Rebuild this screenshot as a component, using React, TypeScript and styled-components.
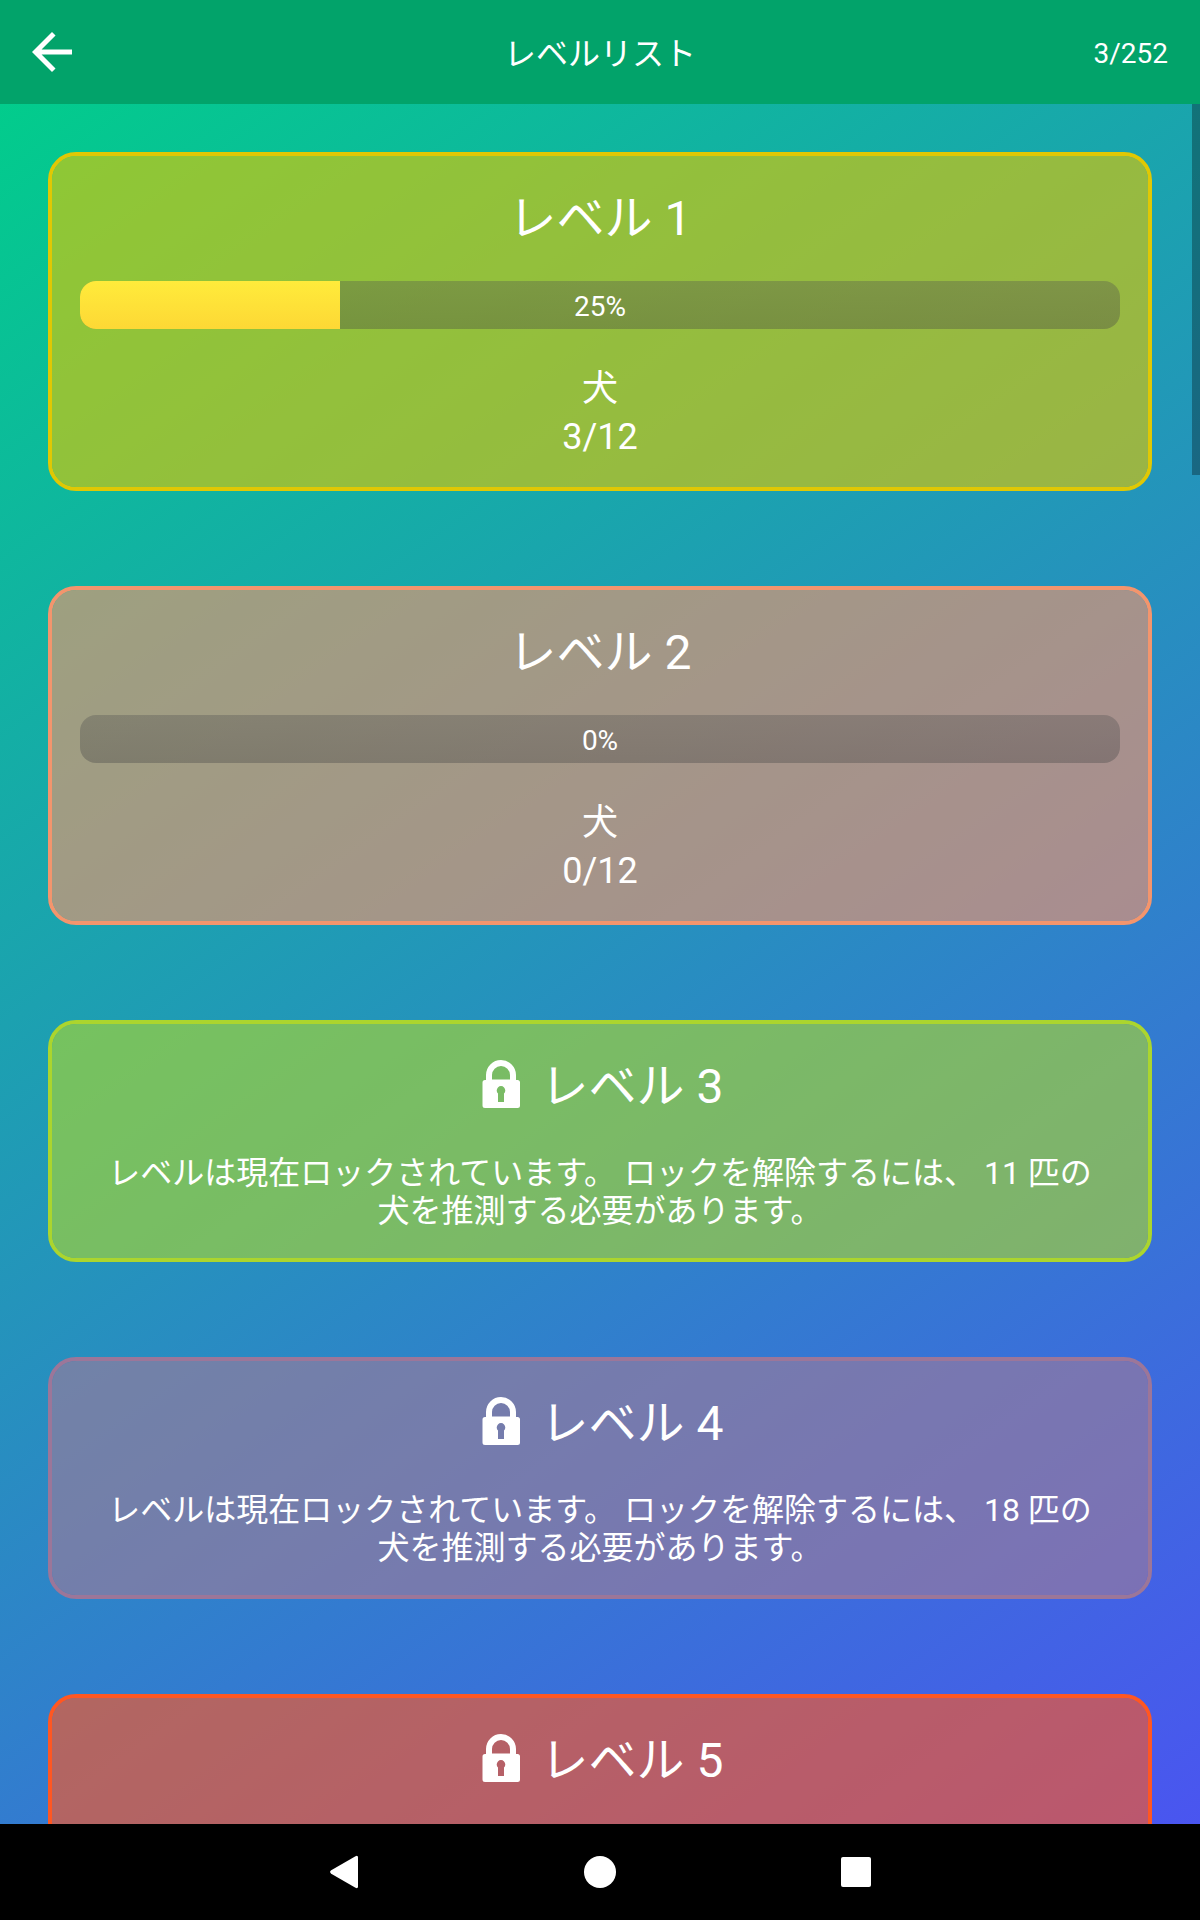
import React from "react";
import styled, { createGlobalStyle } from "styled-components";

const GlobalStyle = createGlobalStyle`
  * {
    box-sizing: border-box;
  }

  html,
  body {
    margin: 0;
    background: #000;
  }

  body {
    font-family: Roboto, "Noto Sans CJK JP", sans-serif;
    color: #fff;
  }
`;

const Screen = styled.div`
  display: flex;
  flex-direction: column;
  height: 100vh;
`;

const Header = styled.header`
  display: grid;
  grid-template-columns: 1fr auto 1fr;
  align-items: center;
  flex: none;
  height: 104px;
  padding: 0 32px;
  background: #02a36a;
`;

const BackButton = styled.button`
  display: flex;
  justify-self: start;
  padding: 0;
  border: 0;
  background: none;
  color: inherit;
  cursor: pointer;
`;

const HeaderTitle = styled.h1`
  margin: 0;
  padding-top: 4px;
  font-size: 32px;
  font-weight: 400;
  line-height: 38px;
`;

const HeaderCount = styled.span`
  justify-self: end;
  padding-top: 4px;
  font-size: 28px;
  line-height: 34px;
`;

const Content = styled.main`
  position: relative;
  flex: 1;
  min-height: 0;
  background: linear-gradient(145deg, #02cc8c, #4a55f0);
`;

const LevelList = styled.ul`
  display: flex;
  flex-direction: column;
  gap: 95px;
  height: 100%;
  margin: 0;
  padding: 48px;
  overflow-y: auto;
  scrollbar-width: none;
  list-style: none;
`;

const ScrollThumb = styled.div`
  position: absolute;
  top: 0;
  right: 0;
  width: 8px;
  height: 371px;
  background: rgba(0, 0, 0, 0.3);
`;

const Card = styled.li<{ $border: string; $fill: string }>`
  display: flex;
  flex-direction: column;
  flex: none;
  gap: 35px;
  padding: 36px 28px 26px;
  border: 4px solid ${(p) => p.$border};
  border-radius: 28px;
  background: ${(p) => p.$fill};
  background-clip: padding-box;
  text-align: center;
`;

const TitleRow = styled.div`
  display: flex;
  justify-content: center;
  gap: 16px;
`;

const CardTitle = styled.h2`
  margin: 0;
  font-size: 48px;
  font-weight: 400;
  line-height: 54px;
`;

const ProgressTrack = styled.div`
  position: relative;
  display: flex;
  align-items: center;
  justify-content: center;
  height: 48px;
  overflow: hidden;
  border-radius: 16px;
  background: linear-gradient(rgba(80, 80, 80, 0.34), rgba(68, 68, 68, 0.36));
`;

const ProgressFill = styled.div`
  position: absolute;
  inset: 0 auto 0 0;
  background: linear-gradient(#ffeb3b, #fdd835);
`;

const ProgressLabel = styled.span`
  position: relative;
  padding-top: 4px;
  font-size: 28px;
  line-height: 34px;
`;

const Stats = styled.div`
  padding-top: 1px;
  font-size: 36px;
  line-height: 48px;
`;

const Description = styled.p`
  margin: 0;
  padding: 5px 16px 2px;
  font-size: 32px;
  line-height: 38px;
`;

const NavBar = styled.nav`
  display: flex;
  align-items: center;
  justify-content: center;
  gap: 208px;
  flex: none;
  height: 96px;
  background: #000;
`;

const NavButton = styled.button`
  display: flex;
  padding: 0;
  border: 0;
  background: none;
  color: inherit;
  cursor: pointer;
`;

const ArrowIcon = () => (
  <svg width="40" height="40" viewBox="4 4 16 16" fill="currentColor" aria-hidden="true">
    <path d="M20 11H7.83l5.59-5.59L12 4l-8 8 8 8 1.41-1.41L7.83 13H20v-2z" />
  </svg>
);

const LockIcon = () => (
  <svg width="48" height="48" viewBox="0 0 48 48" fill="currentColor" aria-hidden="true">
    <path
      fillRule="evenodd"
      d="M9 20V15a15 15 0 0 1 30 0v5h1.500a2.500 2.500 0 0 1 2.500 2.500V45.500a2.500 2.500 0 0 1-2.500 2.500h-32.500a2.500 2.500 0 0 1-2.500-2.500V22.500a2.500 2.500 0 0 1 2.500-2.500zM15 19.500h18V15a9 9 0 0 0-18 0zM21 33.500V42h6V33.500a4.300 4.300 0 1 0-6 0z"
    />
  </svg>
);

const NavIcon = ({ children }: { children: React.ReactNode }) => (
  <svg width="48" height="48" viewBox="0 0 48 48" fill="currentColor" aria-hidden="true">
    {children}
  </svg>
);

interface Level {
  id: number;
  border: string;
  fill: string;
  total: number;
  solved?: number;
  required?: number;
}

const levels: Level[] = [
  { id: 1, border: "#e0c804", fill: "rgba(224, 200, 0, 0.627)", total: 12, solved: 3 },
  { id: 2, border: "#f3956d", fill: "rgba(243, 149, 109, 0.627)", total: 12, solved: 0 },
  { id: 3, border: "#abd52e", fill: "rgba(171, 215, 46, 0.627)", total: 12, required: 11 },
  { id: 4, border: "#9c7699", fill: "rgba(158, 122, 153, 0.627)", total: 12, required: 18 },
  { id: 5, border: "#ff5722", fill: "rgba(255, 87, 34, 0.627)", total: 12, required: 25 },
];

const LevelCard = ({ level }: { level: Level }) => {
  const locked = level.required !== undefined;
  const percent = Math.round(((level.solved ?? 0) / level.total) * 100);

  return (
    <Card $border={level.border} $fill={level.fill}>
      <TitleRow>
        {locked && <LockIcon />}
        <CardTitle>{`レベル ${level.id}`}</CardTitle>
      </TitleRow>
      {locked ? (
        <Description>
          {`レベルは現在ロックされています。 ロックを解除するには、 ${level.required} 匹の犬を推測する必要があります。`}
        </Description>
      ) : (
        <>
          <ProgressTrack
            role="progressbar"
            aria-label={`レベル ${level.id}`}
            aria-valuemin={0}
            aria-valuemax={100}
            aria-valuenow={percent}
          >
            <ProgressFill style={{ width: `${percent}%` }} />
            <ProgressLabel>{`${percent}%`}</ProgressLabel>
          </ProgressTrack>
          <Stats>
            <div>犬</div>
            <div>{`${level.solved}/${level.total}`}</div>
          </Stats>
        </>
      )}
    </Card>
  );
};

export default function App() {
  return (
    <Screen>
      <GlobalStyle />
      <Header>
        <BackButton type="button" aria-label="戻る">
          <ArrowIcon />
        </BackButton>
        <HeaderTitle>レベルリスト</HeaderTitle>
        <HeaderCount>3/252</HeaderCount>
      </Header>
      <Content>
        <LevelList>
          {levels.map((level) => (
            <LevelCard key={level.id} level={level} />
          ))}
        </LevelList>
        <ScrollThumb />
      </Content>
      <NavBar>
        <NavButton type="button" aria-label="戻る">
          <NavIcon>
            <path d="M35.500 8.300Q38 7 38 9.500V38.500Q38 41 35.500 39.700L11.200 25.700Q9 24 11.200 22.300z" />
          </NavIcon>
        </NavButton>
        <NavButton type="button" aria-label="ホーム">
          <NavIcon>
            <circle cx="24" cy="24" r="16" />
          </NavIcon>
        </NavButton>
        <NavButton type="button" aria-label="履歴">
          <NavIcon>
            <rect x="9" y="9" width="30" height="30" rx="2" />
          </NavIcon>
        </NavButton>
      </NavBar>
    </Screen>
  );
}
